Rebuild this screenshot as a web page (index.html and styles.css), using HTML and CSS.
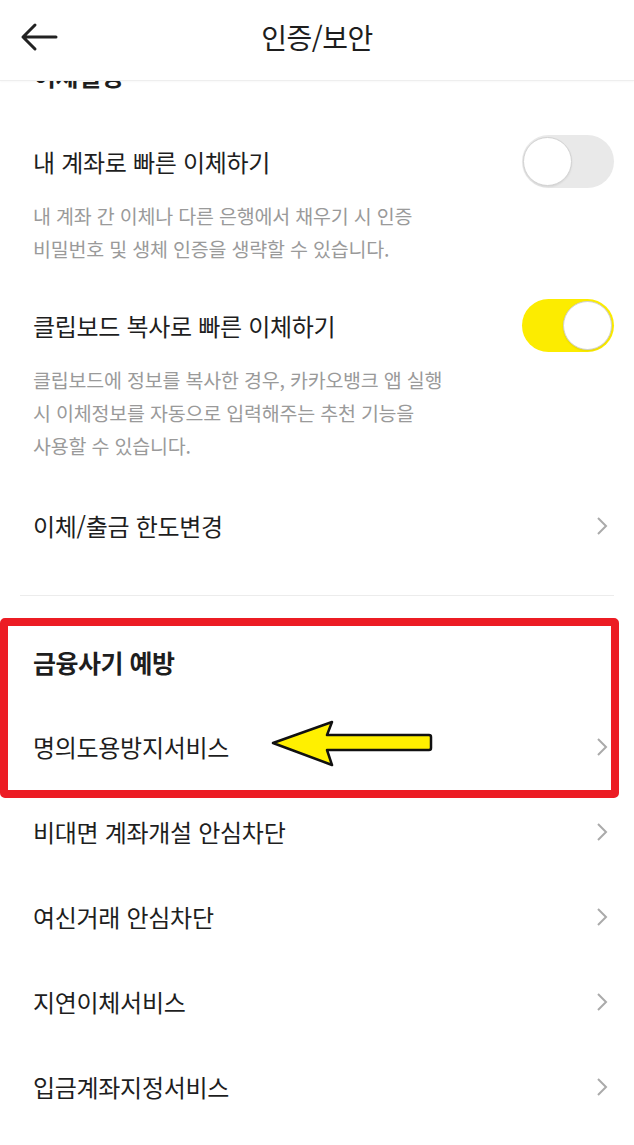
FILE: index.html
```html
<!DOCTYPE html>
<html lang="ko">
<head>
  <meta charset="UTF-8">
  <meta name="viewport" content="width=device-width, initial-scale=1.0">
  <title>인증/보안</title>
  <link rel="stylesheet" href="styles.css">
</head>
<body>
  <header class="topbar">
    <button class="back-btn" aria-label="뒤로">
      <svg width="38" height="30" viewBox="0 0 38 30">
        <path d="M36 15H3M15 3L3 15l12 12" fill="none" stroke="#222" stroke-width="3" stroke-linecap="round" stroke-linejoin="round"/>
      </svg>
    </button>
    <h1 class="topbar-title">인증/보안</h1>
    <span></span>
  </header>

  <main class="scroll">
    <div class="content">
      <!-- 이체설정 -->
      <section class="group group-transfer">
        <h2 class="group-title">이체설정</h2>

        <div class="toggle-item">
          <div class="switch-row">
            <span class="item-label">내 계좌로 빠른 이체하기</span>
            <span class="switch"><span class="knob"></span></span>
          </div>
          <p class="desc">내 계좌 간 이체나 다른 은행에서 채우기 시 인증<br>비밀번호 및 생체 인증을 생략할 수 있습니다.</p>
        </div>

        <div class="toggle-item">
          <div class="switch-row">
            <span class="item-label">클립보드 복사로 빠른 이체하기</span>
            <span class="switch on"><span class="knob"></span></span>
          </div>
          <p class="desc">클립보드에 정보를 복사한 경우, 카카오뱅크 앱 실행<br>시 이체정보를 자동으로 입력해주는 추천 기능을<br>사용할 수 있습니다.</p>
        </div>

        <a class="link-row link-first" href="#">
          <span class="item-label">이체/출금 한도변경</span>
          <svg class="chevron" width="12" height="20" viewBox="0 0 12 20"><path d="M2 2l8 8-8 8" fill="none" stroke="#aaa" stroke-width="2"/></svg>
        </a>
      </section>

      <div class="divider"></div>

      <!-- 금융사기 예방 -->
      <section class="group group-fraud">
        <div class="highlight">
          <h2 class="group-title">금융사기 예방</h2>
          <a class="link-row" href="#">
            <span class="item-label">명의도용방지서비스</span>
            <svg class="chevron" width="12" height="20" viewBox="0 0 12 20"><path d="M2 2l8 8-8 8" fill="none" stroke="#aaa" stroke-width="2"/></svg>
          </a>
          <div class="callout-box"></div>
          <svg class="callout-arrow" width="164" height="52" viewBox="0 0 164 52">
            <path d="M3 25L62 4L57 17H159Q161 17 161 19V30Q161 32 159 32H57L62 47Z" fill="#fff000" stroke="#111" stroke-width="2.5" stroke-linejoin="round"/>
          </svg>
        </div>

        <a class="link-row" href="#">
          <span class="item-label">비대면 계좌개설 안심차단</span>
          <svg class="chevron" width="12" height="20" viewBox="0 0 12 20"><path d="M2 2l8 8-8 8" fill="none" stroke="#aaa" stroke-width="2"/></svg>
        </a>
        <a class="link-row" href="#">
          <span class="item-label">여신거래 안심차단</span>
          <svg class="chevron" width="12" height="20" viewBox="0 0 12 20"><path d="M2 2l8 8-8 8" fill="none" stroke="#aaa" stroke-width="2"/></svg>
        </a>
        <a class="link-row" href="#">
          <span class="item-label">지연이체서비스</span>
          <svg class="chevron" width="12" height="20" viewBox="0 0 12 20"><path d="M2 2l8 8-8 8" fill="none" stroke="#aaa" stroke-width="2"/></svg>
        </a>
        <a class="link-row" href="#">
          <span class="item-label">입금계좌지정서비스</span>
          <svg class="chevron" width="12" height="20" viewBox="0 0 12 20"><path d="M2 2l8 8-8 8" fill="none" stroke="#aaa" stroke-width="2"/></svg>
        </a>
      </section>
    </div>
  </main>
</body>
</html>
```

FILE: styles.css
```css
/* base */
* {
  box-sizing: border-box;
}
body {
  margin: 0;
  background: #fff;
  color: #222;
  font-family: "Noto Sans CJK KR", "Noto Sans", sans-serif;
  height: 1145px;
  overflow: hidden;
}

/* top bar */
.topbar {
  position: relative;
  z-index: 2;
  height: 81px;
  display: grid;
  grid-template-columns: 90px 1fr 90px;
  align-items: center;
  padding-bottom: 7px;
  background: #fff;
  border-bottom: 1px solid #eeeeee;
  box-shadow: 0 1px 2px rgba(0, 0, 0, 0.03);
}
.back-btn {
  border: none;
  background: none;
  padding: 0 0 0 20px;
  display: flex;
  align-items: center;
  cursor: pointer;
}
.topbar-title {
  margin: 0;
  text-align: center;
  font-size: 28px;
  font-weight: 400;
  letter-spacing: -0.5px;
  color: #1e1e1e;
}

/* scroll area */
.scroll {
  height: 1064px;
  overflow: hidden;
}
.content {
  margin-top: -72px;
}

.group-title {
  margin: 0;
  padding: 40px 0 0 33px;
  height: 92px;
  line-height: 52px;
  font-size: 25px;
  font-weight: 700;
  letter-spacing: -0.5px;
  color: #1e1e1e;
}

.item-label {
  font-size: 24px;
  letter-spacing: -0.3px;
  color: #1e1e1e;
}

/* toggle rows */
.toggle-item {
  padding-top: 34px;
}
.switch-row {
  height: 53px;
  display: flex;
  align-items: center;
  justify-content: space-between;
  padding: 0 20px 0 33px;
}
.desc {
  margin: 11px 0 0;
  padding-left: 33px;
  font-size: 19.5px;
  line-height: 33px;
  letter-spacing: -0.2px;
  color: #9a9a9a;
}
.switch {
  position: relative;
  width: 92px;
  height: 53px;
  border-radius: 27px;
  background: #e9e9e9;
}
.switch .knob {
  position: absolute;
  top: 2px;
  left: 1px;
  width: 49px;
  height: 49px;
  border-radius: 50%;
  background: #fff;
  border: 1.5px solid #d2d2d2;
  box-shadow: 0 1px 2px rgba(0, 0, 0, 0.08);
}
.switch.on {
  background: #fcec00;
}
.switch.on .knob {
  left: auto;
  right: 2px;
  border-color: #cfcfcf;
}

/* link rows */
.link-row {
  height: 85px;
  display: flex;
  align-items: center;
  justify-content: space-between;
  padding: 0 26px 0 33px;
  text-decoration: none;
}
.link-first {
  margin-top: 21px;
}
.group-transfer {
  padding-bottom: 27px;
}
.divider {
  height: 1px;
  margin: 0 20px;
  background: #ececec;
}

/* highlighted block */
.group-fraud .group-title {
  height: 108px;
}
.highlight {
  position: relative;
}
.callout-box {
  position: absolute;
  top: 22px;
  left: 0;
  width: 619px;
  height: 180px;
  border: 8px solid #ec1c24;
  border-radius: 5px;
  pointer-events: none;
}
.callout-arrow {
  position: absolute;
  top: 122px;
  left: 270px;
}
```
